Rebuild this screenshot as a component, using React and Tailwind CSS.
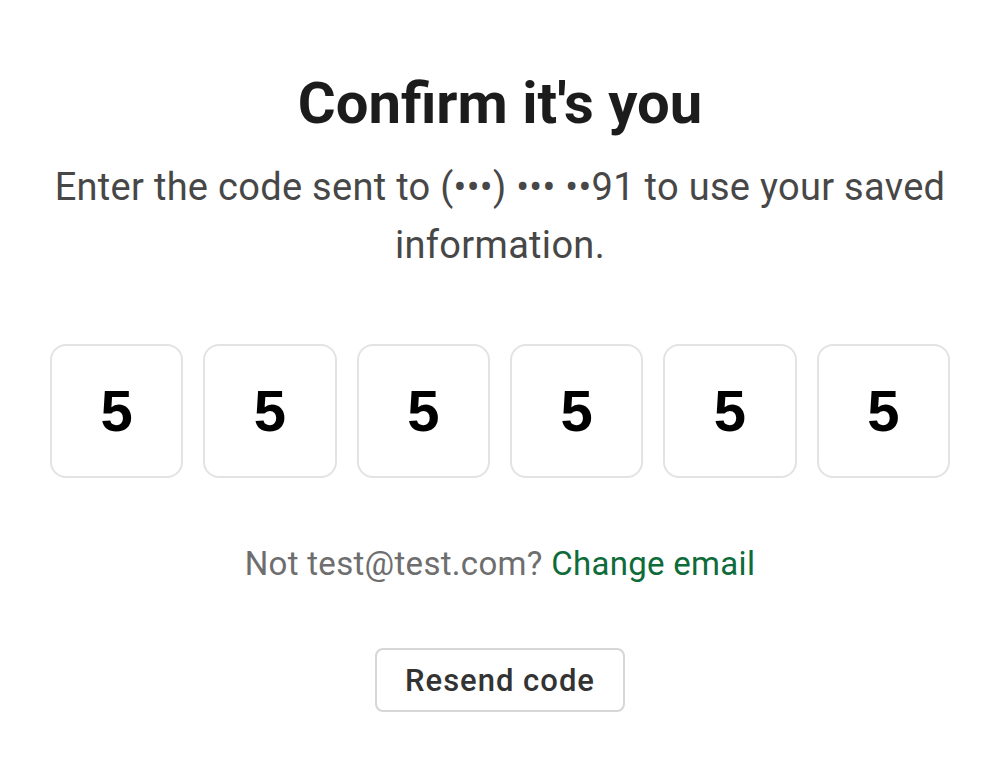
export default function App() {
  const digits = ["5", "5", "5", "5", "5", "5"];
  return (
    <div className="min-h-[762px] w-full bg-white flex flex-col items-center">
      <div className="w-[900px] flex flex-col items-center pt-[68px] font-['Roboto',sans-serif]">
        <h1 className="text-[58px] leading-[70px] font-bold text-[#1c1c1c] text-center">
          Confirm it's you
        </h1>
        <p className="mt-[20px] text-[38px] leading-[58px] tracking-[0.3px] text-[#474747] text-center w-[900px]">
          Enter the code sent to (•••) ••• ••91 to use your saved information.
        </p>
        <div className="mt-[70px] w-[900px] flex gap-[20px]">
          {digits.map((d, i) => (
            <div
              key={i}
              className="flex-1 h-[134px] rounded-[16px] border-2 border-[#e3e3e3] flex items-center justify-center"
            >
              <span className="font-['Liberation_Sans',Arial,sans-serif] font-bold text-[58px] text-black leading-none">
                {d}
              </span>
            </div>
          ))}
        </div>
        <p className="mt-[66px] text-[33px] leading-[40px] tracking-[0.3px] text-[#6e6e6e] text-center">
          Not test@test.com?{" "}
          <a className="text-[#0e6b3a]">Change email</a>
        </p>
        <button className="mt-[64px] h-[64px] px-[28px] pt-[3px] rounded-[8px] border-2 border-[#d6d6d6] bg-white text-[31px] tracking-[1px] text-[#333333] font-medium">
          Resend code
        </button>
      </div>
    </div>
  );
}
